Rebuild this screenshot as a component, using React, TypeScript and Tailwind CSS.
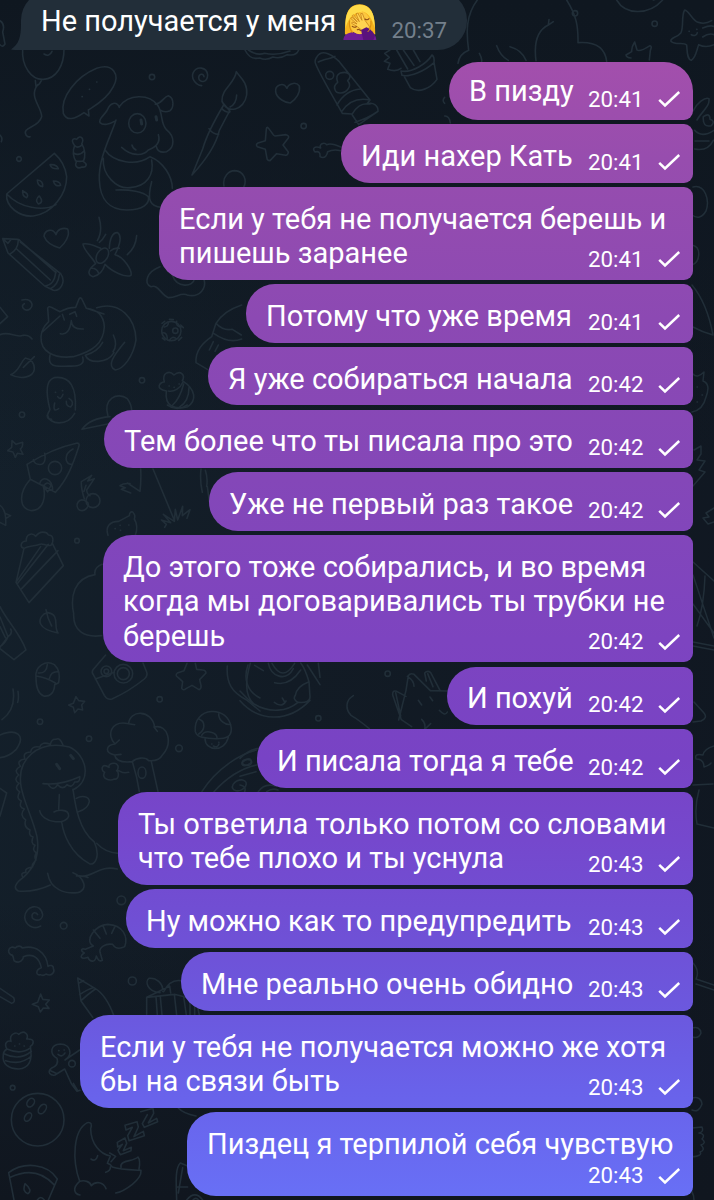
// src/App.tsx
import type { ReactNode } from "react";

type Message = {
  lines: string[];
  time: string;
  className: string;
  metaBelow?: boolean;
};

const messages: Message[] = [
  { lines: ["В пизду"], time: "20:41", className: "w-[244px] h-[58.45px] rounded-tr-[29px] pt-[5px]" },
  { lines: ["Иди нахер Кать"], time: "20:41", className: "w-[352px] h-[58.45px] pt-[7px]" },
  { lines: ["Если у тебя не получается берешь и", "пишешь заранее"], time: "20:41", className: "w-[534px] h-[92.9px] pt-[7px]" },
  { lines: ["Потому что уже время"], time: "20:41", className: "w-[447px] h-[58.45px] pt-[7px]" },
  { lines: ["Я уже собираться начала"], time: "20:42", className: "w-[485px] h-[58.45px] pt-[7px]" },
  { lines: ["Тем более что ты писала про это"], time: "20:42", className: "w-[589px] h-[58.45px] pt-[7px]" },
  { lines: ["Уже не первый раз такое"], time: "20:42", className: "w-[484px] h-[58.45px] pt-[7px]" },
  { lines: ["До этого тоже собирались, и во время", "когда мы договаривались ты трубки не", "берешь"], time: "20:42", className: "w-[590px] h-[127.3px] pt-[7px]" },
  { lines: ["И похуй"], time: "20:42", className: "w-[246px] h-[58.45px] pt-[7px]" },
  { lines: ["И писала тогда я тебе"], time: "20:42", className: "w-[436px] h-[58.45px] pt-[7px]" },
  { lines: ["Ты ответила только потом со словами", "что тебе плохо и ты уснула"], time: "20:43", className: "w-[575px] h-[92.9px] pt-[7px]" },
  { lines: ["Ну можно как то предупредить"], time: "20:43", className: "w-[567px] h-[58.45px] pt-[7px]" },
  { lines: ["Мне реально очень обидно"], time: "20:43", className: "w-[512px] h-[58.45px] pt-[7px]" },
  { lines: ["Если у тебя не получается можно же хотя", "бы на связи быть"], time: "20:43", className: "w-[613px] h-[92.9px] pt-[7px]" },
  { lines: ["Пиздец я терпилой себя чувствую"], time: "20:43", className: "w-[506px] h-[84px] pt-[7px]", metaBelow: true },
];

// --- SVG Icons ---
const CheckIcon = () => (
  <svg className="w-[24px] h-[18px]" viewBox="0 0 24 18" fill="none" stroke="currentColor" strokeWidth="2.5">
    <path d="M2.2 9.8L8 15.4L22.2 2" />
  </svg>
);

const FacepalmIcon = () => (
  <svg className="w-[34px] h-[37px] shrink-0" viewBox="0 0 102 111">
    <path d="M6 94C7 62 2 5 50 4C98 5 96 62 97 94Q82 101 72 88H30Q19 101 6 94Z" fill="#f5b21c" />
    <path d="M8 76C5 28 20 6 50 5C81 6 96 28 95 76C89 50 78 31 60 26C36 28 14 42 8 76Z" fill="#ffdc4a" />
    <path d="M21 50C30 42 46 35 58 25C70 31 82 43 82 58C82 82 68 95 51 95C34 95 20 80 21 50Z" fill="#fbc740" />
    <path d="M1 111C2 94 18 88 32 88Q50 100 69 88C88 88 99 94 100 111Z" fill="#6f1c96" />
    <path d="M28 38L31 35L49 56L39 32L44 30L57 52L53 32L58 31L66 52L79 70C80 80 68 86 57 82L43 71L26 61L28 57L42 63L23 46L27 43L43 57Z" fill="#ffd351" stroke="#c27b17" strokeWidth="2.2" strokeLinejoin="round" />
    <path d="M54 81L70 73C79 76 92 87 96 98L91 111H61L57 94Z" fill="#5a127c" />
    <path d="M28 70Q34 75 40 71M66 48Q73 53 78 47M43 80Q48 77 53 83" fill="none" stroke="#8d4b16" strokeWidth="3.5" strokeLinecap="round" />
    <path d="M20 52Q16 75 29 89M84 54Q85 77 74 87" fill="none" stroke="#d78d12" strokeWidth="3" />
  </svg>
);

// Chat wallpaper, each patch is drawn on a 3x grid
const Patch = ({ x, y, children }: { x: number; y: number; children: ReactNode }) => (
  <g transform={`translate(${x} ${y}) scale(0.33333)`}>{children}</g>
);

const Wallpaper = () => (
  <svg
    className="absolute inset-0 w-[714px] h-[1200px]"
    viewBox="0 0 714 1200"
    fill="none"
    stroke="#212e38"
    strokeWidth="4.8"
    strokeLinecap="round"
    strokeLinejoin="round"
  >
    <Patch x={0} y={0}>
      {/* balloon and speech cloud */}
      <path d="M68 145C64 200 95 240 130 238C168 236 193 198 192 145M132 162q16 10 24-8M106 242l2 18l10-8l6-10M113 254C85 290 125 320 125 350C115 385 65 380 78 405q6 8 12 5" />
      <path d="M190 340C180 290 230 230 290 205C340 188 360 225 340 260C320 300 280 320 265 330L267 348L252 338C225 357 200 365 190 340ZM268 268h1M290 246h1M246 290h1" />
      <path d="M0 62Q16 72 8 96L15 132Q8 144 0 134M0 405q9 9 4 20M57 470a7 7 0 1 0 .1 14a7 7 0 1 0-.1-14" />
      <circle cx="456" cy="231" r="8" />
      <circle cx="911" cy="378" r="8" />
      <path d="M605 257C585 255 572 232 580 217C590 198 620 200 623 225C622 250 597 249 596 233C597 221 610 219 612 230" />
      {/* candy */}
      <path d="M224 437C208 415 225 415 230 418C241 402 254 416 245 432C256 445 257 470 250 485C265 493 258 503 246 501C232 508 223 498 229 486C219 472 217 452 224 437ZM224 437Q234 447 247 434M221 459Q237 470 252 453M226 482Q240 486 250 482" />
      {/* brush */}
      <path d="M709 215C705 250 665 265 666 302C680 345 733 331 740 285C744 247 720 232 709 215ZM710 285Q709 312 690 321M666 305L690 334M671 315C650 350 620 405 608 447L576 525C620 477 650 427 658 391L687 336M627 386Q638 403 656 403M665 325Q674 337 689 337" />
      {/* heart, star */}
      <path d="M861 265C850 244 824 255 827 276C831 296 857 309 871 309C888 298 902 278 898 258C886 242 864 253 861 265Z" />
      <path d="M803 382C809 386 819 407 825 408L858 404Q869 408 865 414L849 435L865 456Q864 466 857 466L830 461L810 482Q801 482 801 475L796 448L772 440Q766 433 774 429L796 422L799 387Q799 382 803 382Z" />
      <path d="M735 150Q750 181 779 174Q799 183 819 171Q840 178 862 164Q889 169 896 150M745 150Q770 168 794 160Q830 168 870 153" />
      {/* wrapped roll */}
      <path d="M951 170C967 144 1000 167 1018 185L1110 300L1100 312C1120 305 1135 317 1134 334L1076 374L1055 342L1027 340C1005 300 960 225 947 192Q942 181 951 170ZM955 186C970 177 1000 175 1005 169M1011 315Q1036 270 1082 267M1025 335Q1055 289 1110 300M1058 340Q1078 306 1110 312M1065 367Q1105 354 1132 335M1021 219C1048 212 1057 228 1043 242Q1054 255 1044 267C1035 281 1009 284 1005 269Q1000 257 1013 247Q1005 226 1021 219Z" />
      <circle cx="989" cy="226" r="12" />
      {/* cactus */}
      <path d="M1170 150L1154 160L1168 172L1153 184L1170 190L1163 208Q1188 217 1203 205M1190 150L1223 207M1210 150L1242 196M1240 150L1260 185M1203 213C1236 220 1281 190 1296 165Q1304 170 1302 188C1274 214 1228 232 1206 226ZM1213 230L1231 263C1256 282 1293 264 1311 238L1302 187" />
      <path d="M1022 441Q994 428 980 434C972 425 956 433 962 444C943 436 936 446 945 456Q962 451 960 470C976 479 982 462 983 455Q1000 447 1022 452M672 558C666 529 688 512 704 512C732 514 742 540 731 562" />
      {/* watermelon slice */}
      <path d="M163 460L20 582C16 620 60 652 100 648C160 640 200 580 200 530Q195 488 163 460ZM20 582C60 625 130 635 168 614M150 494q20-2 25 12q-20 2-25-12ZM112 540q18 2 16 20q-16-2-16-20ZM160 543q20 0 22 13q-17 6-22-13ZM68 572q-2 17 12 21q10-10-12-21ZM118 588q-15 12-3 24q18-5 3-24Z" />
      {/* puppy */}
      <path d="M358 322C350 302 330 308 322 330C310 350 295 355 300 368C310 378 330 372 343 364M358 320C385 281 448 281 473 316C490 340 480 370 500 390C525 410 525 442 500 455Q475 461 469 440M466 313C490 308 490 290 505 287C525 295 520 325 510 332Q494 339 480 330M348 360C330 415 295 475 298 540C300 600 330 630 380 630C430 630 450 610 445 590C430 575 390 568 348 570M315 450C340 487 410 500 450 470M310 475C306 525 350 568 390 563C440 560 463 525 455 480M450 470C490 485 517 530 517 565M365 442C395 470 430 468 445 450C470 440 482 425 475 404M455 545C440 600 450 620 485 622M396 435q2 10 12 15" />
      <ellipse cx="412" cy="370" rx="26" ry="29" />
      <path strokeWidth="9" d="M423 360l2 12M468 350l2 10" />
    </Patch>

    <Patch x={440} y={0}>
      <path d="M112 0C78 45 78 95 86 151Q58 162 54 190M380 0C408 45 415 75 414 128C455 125 494 134 500 184M340 65L325 75C294 90 281 128 288 182M327 59l-2 15M170 137Q181 168 205 181M210 140Q246 150 258 181M118 160q9 16 7 24" />
      <path d="M530 0C555 44 625 48 668 0M640 0l30-10M584 126L591 150Q599 157 630 137Q637 139 631 151L628 180M584 126Q574 141 575 155L558 165Q560 173 573 174" />
      <circle cx="405" cy="40" r="8" />
      <circle cx="644" cy="71" r="8" />
      <path d="M734 30C748 33 757 61 774 67Q795 74 815 62M734 30C723 48 732 79 723 98C711 114 689 112 693 124C708 137 730 125 740 135C742 153 740 177 754 181C768 173 770 150 776 134Q798 145 822 134M788 84q24-10 36-4M788 111q20-14 36-6M747 94h1M770 88h1M754 104q14 7 18-6" />
      <path d="M760 332C770 310 795 290 807 296C810 320 786 333 771 360M790 350q20-14 20 8q17 5 4 19Q787 384 790 350M764 391Q785 415 822 391M765 423h42M764 447q40 8 56-26M14 292q-9 10 0 18M14 348Q28 347 31 369" />
    </Patch>

    <Patch x={0} y={180}>
      {/* pencil */}
      <path d="M8 176L53 178Q63 181 61 186L182 281C200 307 180 334 160 331L134 318L24 219ZM8 176L24 190L34 177M29 223Q54 210 55 181M50 207L151 300M63 185L168 278M134 318Q165 315 167 274M151 326Q174 316 178 284" />
      <path d="M168 164C159 143 134 149 132 169C140 190 164 200 179 204C196 190 211 165 203 147C187 141 171 150 168 164Z" />
      {/* propeller plane */}
      <path d="M297 112Q309 154 292 182M317 163Q308 180 298 187M410 167Q407 203 382 224M328 205C329 176 338 156 353 158C370 170 353 210 345 224C373 231 397 273 393 286C377 295 334 273 315 253Q306 285 279 290C260 284 264 268 287 251C276 231 250 210 249 192C268 188 290 201 302 205M272 265q20-1 24 16M331 213q12-11 27-8" />
      <ellipse cx="307" cy="227" rx="16" ry="25" transform="rotate(32 307 227)" />
      <path d="M66 360C93 353 103 374 90 387C74 398 59 377 73 371M0 382L23 410L0 431M0 464C30 452 45 475 70 466Q86 464 96 477" />
      {/* sleeping cat */}
      <path d="M146 425L143 385Q146 377 154 382L180 395Q204 382 227 382L237 357Q243 349 247 360L259 385C290 390 311 401 313 441C310 490 280 514 220 530C160 537 121 514 123 470Q124 446 146 425ZM290 383C360 361 407 416 408 480C400 530 370 567 346 570C320 558 338 530 374 487M340 465Q354 495 339 515M256 526C267 551 321 552 342 518M256 526Q294 514 308 487M150 525C143 558 160 561 205 558C240 560 255 552 248 531M214 422Q215 449 250 447M214 422Q208 468 181 461M209 403l16-8l5 14M259 385L312 402M128 455L180 408M193 420l-6-17" />
      {/* leaf, ghost */}
      <path d="M76 534C60 547 59 573 32 584C66 602 100 589 103 568Q104 539 76 534ZM70 562L103 530M155 718C135 717 142 702 150 689C140 650 132 603 162 593C211 586 230 623 226 690M166 637h1M187 632h1M173 650q9 13 16-7M164 669q-7 30 12 17M207 655q18 11 5 26q-14-2-13-17" />
      <circle cx="426" cy="601" r="8" />
      <circle cx="66" cy="704" r="8" />
      <path d="M324 709C308 656 352 634 382 656Q394 672 395 690" />
      {/* spotted ball */}
      <circle cx="514" cy="453" r="29" />
      <circle cx="526" cy="452" r="8" />
      <path d="M493 441q11-2 12-12M486 459q14-4 16 16M508 482q8-17 22-5M530 424q-4 13 13 17M486 430l8-6M508 418l12 1M542 435l8 8M545 472l-9 9M495 480l-8-6" />
      <path d="M480 260C440 275 430 310 453 320C475 312 482 344 505 353C530 354 544 334 564 346C600 352 620 325 612 298M517 285C530 324 580 324 584 294M648 430C663 405 695 385 725 375M648 430L635 470C607 490 586 512 588 548L622 568M648 430Q668 453 697 448L724 465M641 460Q686 492 725 477M640 485l-12 25M655 495l-10 19" />
      {/* cupcake */}
      <path d="M499 633C463 627 480 605 493 606C485 578 508 570 522 585C541 569 557 584 547 602C589 630 590 661 563 680C525 690 493 680 499 633ZM505 633C521 637 541 625 549 606M518 675Q539 657 551 612M537 682Q567 665 567 623M507 618h1M522 622h1M537 612h1" />
    </Patch>

    <Patch x={0} y={400}>
      <path d="M142 45C148 74 201 81 224 40M246 88Q270 55 330 50M246 88L334 70M502 15q30 21 60 0" />
      <path d="M36 122L48 133L68 127Q69 141 61 147L69 163L52 160L46 172L39 156L23 152L35 142Z" />
      {/* cheese, cherries */}
      <path d="M81 193Q158 145 232 129Q240 130 236 141C220 190 202 240 166 277L91 238ZM100 179Q104 196 125 193Q139 186 134 160M219 147C189 163 195 194 215 193M119 251C125 225 158 235 158 273M91 238C54 280 57 326 94 332C131 330 139 290 129 255M131 259q9-18 22-3l-10 20Z" />
      <circle cx="165" cy="204" r="20" />
      <circle cx="279" cy="302" r="21" />
      <path d="M259 304C235 290 223 317 238 330C255 337 269 320 263 307M253 296Q243 266 244 245L275 226L263 243L283 236L260 270Q261 283 270 287M252 274l6-18" />
      {/* grass and palm */}
      <path d="M422 207Q424 240 420 274L382 249M392 279L364 268L376 263L360 257Q370 249 390 251M459 207L522 358M494 382L499 373L484 360L512 368L490 343L523 364L526 328L533 360L548 319L547 347L570 329L561 355M603 207Q599 242 607 277M616 211q8 24 4 48M622 260l6 44" />
      <path d="M324 406C315 379 330 364 356 364L388 347Q389 333 398 336Q408 346 403 357Q416 378 406 405M360 376h1M345 386h1M361 391h1M386 375h1" />
      <circle cx="231" cy="422" r="7" />
      <path d="M0 316Q20 330 17 376L0 367M18 341l14 6l-14 8" />
      {/* cake slice */}
      <path d="M72 445L48 547L87 608L190 497L157 430M72 445C59 442 61 424 79 423C77 401 98 397 107 409C120 391 140 395 145 405C162 405 162 425 153 436C138 440 127 428 120 433C100 440 86 436 72 445ZM122 440L48 547M145 433L53 550M174 452L65 566" />
      <path d="M132 642C112 660 112 687 174 699C159 679 182 643 142 638ZM138 629Q142 655 155 678M0 620C19 660 60 700 78 750L42 779L0 746M0 651L24 710L0 742M0 680l16 33M24 710Q39 700 32 687M24 710Q15 732 0 739M305 707C252 714 219 692 221 641C210 590 222 534 285 524Q281 503 306 493" />
    </Patch>

    <Patch x={0} y={640}>
      {/* acorn */}
      <path d="M108 113C104 78 138 59 163 74C178 88 181 105 176 128L164 134C163 159 149 171 131 168C112 160 108 134 108 113ZM108 108Q140 113 166 129M115 99q25 2 27-25M148 116q6-24 28-20" />
      {/* camera */}
      <path d="M317 45L279 89Q274 96 280 104L313 166Q322 181 336 177Q387 154 433 117Q444 107 440 96L429 69M286 117L343 97" />
      <circle cx="319" cy="94" r="16" />
      <circle cx="319" cy="94" r="7" />
      <circle cx="370" cy="101" r="28" />
      <circle cx="370" cy="101" r="18" />
      <path d="M561 70L552 92L532 99Q524 106 534 112L548 125L545 145Q550 153 558 146L576 136L597 149Q605 145 603 136L599 119L618 99Q617 90 608 90L590 88L586 70" />
      <path d="M228 170L236 182L254 184L245 195L248 210L234 207L224 218L220 202L206 195L220 190Z" />
      <circle cx="120" cy="245" r="8" />
      <circle cx="267" cy="296" r="8" />
      <circle cx="479" cy="178" r="8" />
      <circle cx="537" cy="325" r="10" />
      <path d="M39 147Q49 208 6 239M54 154Q57 175 53 187M0 285C48 264 80 285 48 329Q26 351 0 353M0 445L20 459L0 528" />
      {/* broccoli */}
      <path d="M397 365Q348 370 344 345C312 338 318 315 345 312C319 286 332 240 386 251C388 210 455 206 464 261C504 252 519 309 488 344Q477 365 446 362C435 349 408 354 397 365ZM386 251l18 3M462 261l10 13M345 312l13-12M344 345l19-2M397 365Q412 412 418 455M454 365L474 455M386 397C360 403 362 389 351 392C367 363 322 365 327 382C306 366 300 391 314 397C302 417 330 424 343 417C357 421 358 396 350 392" />
      <ellipse cx="426" cy="398" rx="12" ry="17" />
      {/* mushroom */}
      <path d="M586 275C577 200 687 192 694 266Q694 284 683 290C670 300 625 296 608 292Q590 290 586 275ZM596 282C616 270 617 245 598 238M605 286C617 266 652 278 651 294M656 222C656 241 675 256 692 253M635 312h1M656 307h1M640 318q12 7 17-6M615 296C616 334 673 338 685 292" />
      {/* dinosaur */}
      <path d="M218 450C280 420 257 342 208 321C150 306 96 323 70 373C40 437 93 510 111 590C119 643 107 679 70 712C45 730 39 745 55 753C94 756 126 747 151 735M129 431Q180 437 239 410M145 434q15 22 28 0q15 18 28 0q15 12 23-8q17 2 15-15M219 448C225 490 235 570 283 606C302 649 285 678 268 671C210 640 190 580 185 546M178 464L176 508M119 512C127 550 198 556 206 528C207 505 170 510 162 516M229 475C245 465 268 469 268 485C264 504 251 511 235 515M290 610Q315 638 355 640M248 709C286 706 300 675 352 687M143 700C151 749 195 762 232 758C268 750 251 711 219 698M229 708q25-2 35 5M189 315Q180 291 168 298Q155 296 151 313Q126 303 119 321Q94 317 92 336Q66 337 75 357Q48 361 61 379Q39 391 56 405Q39 419 57 430Q41 444 59 456Q47 476 64 483Q55 503 73 507Q57 525 77 540Q70 561 90 570Q85 587 99 591Q91 611 105 616Q95 631 109 638Q101 652 108 660Q93 675 98 681Q72 684 78 697Q59 697 69 713" />
      <path strokeWidth="9" d="M170 373l9 13M212 346l8 10" />
      <path d="M606 454C650 385 720 342 770 330M642 455Q701 390 770 375M682 78C678 130 696 157 740 180L780 213M744 75C730 115 740 154 780 174" />
      <ellipse cx="740" cy="367" rx="15" ry="8" transform="rotate(-25 740 367)" />
      <ellipse cx="718" cy="436" rx="22" ry="15" transform="rotate(-25 718 436)" />
    </Patch>

    <Patch x={240} y={640}>
      {/* pirate */}
      <path d="M31 70C19 110 11 165 42 192C90 221 142 214 174 187Q210 190 210 171L207 125Q195 85 182 69M0 153Q40 195 42 192M0 182C55 245 144 250 210 181M44 76l26 16M85 70C93 110 138 127 160 86M96 70Q128 128 164 70M104 128Q148 140 182 90M202 75L240 134M235 70L240 112M207 125Q170 139 166 166Q157 178 174 187M103 187Q126 205 138 183M127 174l8 14" />
      <circle cx="443" cy="101" r="8" />
      <circle cx="235" cy="235" r="8" />
      <path d="M340 167C317 180 315 207 333 226Q357 240 388 266M476 240L498 151L505 107Q511 98 522 103L571 152L621 153M498 169L470 154Q457 149 458 165L484 239L515 260M559 123L554 99Q563 90 572 98L600 151M502 109Q522 121 522 139M467 158l15 70M563 101l16 39M535 181l10 14M570 171l8 11M545 238q13 12 9 30M554 268l18-17M598 211q17 19 24 5" />
      <path d="M0 355Q28 327 59 325M0 409L48 395M0 435q20 4 14 20M55 455q19-28 54-16M80 455q17-12 34-5" />
      <ellipse cx="21" cy="367" rx="14" ry="9" />
    </Patch>

    <Patch x={0} y={880}>
      <path d="M122 138C100 151 77 136 74 112C75 77 122 66 128 104C127 127 94 124 96 107C97 97 108 95 113 104" />
      <circle cx="191" cy="137" r="10" />
      <circle cx="364" cy="61" r="13" />
      <circle cx="397" cy="303" r="12" />
      <circle cx="38" cy="623" r="7" />
      {/* bones and shrimp */}
      <path d="M67 204C63 197 52 196 46 204C28 194 20 214 32 224C43 225 38 235 43 243C61 253 71 237 70 230C103 218 118 236 124 263C105 270 108 288 121 284Q130 289 138 282C155 291 166 276 160 265C161 255 148 255 144 259C139 216 105 194 67 204Z" />
      <path d="M280 198C250 180 288 135 323 133C370 135 385 171 374 200C355 210 345 204 338 193C315 189 297 203 300 217L307 241Q296 248 289 228C286 249 270 247 264 232C242 239 237 229 253 219C239 212 245 203 256 208ZM280 150L300 175M309 137L319 162M345 139L335 160" />
      <path d="M0 325L41 353Q47 368 35 370L0 350M122 342L128 358L148 360L137 373L147 385L130 384L121 396L115 380L97 373L113 367Z" />
      {/* pencil, gift */}
      <path d="M233 294L285 325Q319 345 342 408M233 294L243 363L278 412M237 309L251 302M239 344Q264 327 279 323M243 362Q263 343 286 327" />
      <path d="M440 403V352L523 343L588 359L598 405M440 352L472 337M523 343L530 405M468 350L472 405M481 350L486 405M551 350L559 405M480 338C440 335 435 303 447 295C468 292 490 310 488 334M491 335Q510 298 541 302M472 337L509 318L512 339M570 365V405M584 365V405" />
      {/* cupcake */}
      <path d="M21 507C10 490 23 480 33 484C26 460 51 455 56 463C73 447 87 464 80 477C105 475 103 491 91 499C99 543 86 565 56 567C27 565 5 554 10 523Q11 512 21 507ZM21 507Q63 526 92 503M12 521Q58 544 94 514M17 542Q63 557 94 528M44 498h1M58 492h1M72 498h1" />
      {/* gingerbread */}
      <path d="M171 535C147 520 151 494 181 492C213 493 219 526 195 540L239 510M171 535Q178 556 154 565C139 577 153 588 165 585L194 567L214 611L231 634L240 631M176 512h1M192 510h1M174 523q13 11 21-4M152 572l19 9M220 610l13 22" />
      <circle cx="216" cy="551" r="10" />
      {/* bowling ball */}
      <circle cx="113" cy="719" r="79" />
      <ellipse cx="92" cy="668" rx="10" ry="14" transform="rotate(35 92 668)" />
      <ellipse cx="127" cy="687" rx="10" ry="16" transform="rotate(35 127 687)" />
      <ellipse cx="84" cy="711" rx="9" ry="14" transform="rotate(35 84 711)" />
      {/* pizza */}
      <path d="M42 960L26 878C71 844 143 850 172 897L145 960M31 892Q108 855 162 914M75 911q-9 25 9 30q15-10-9-30ZM112 960q10-15 21 0" />
      {/* sleeping moon */}
      <path d="M239 904C216 840 219 751 262 728Q279 725 272 746C273 791 300 823 331 828L322 850Q331 852 337 861C357 869 405 870 423 871Q425 890 397 913Q368 936 347 939M239 904C217 923 221 942 240 945M239 904C253 900 270 904 274 917C287 902 310 906 318 926M273 837Q287 847 293 827M317 877Q332 872 331 861M363 862C358 839 399 846 414 831Q422 841 417 867M329 819L347 829L333 845" />
      <path d="M352 787L375 774L380 790L370 812L394 802L393 812L361 824L354 811L367 793L353 801ZM375 736L411 725L415 741L402 770L430 754L433 767L387 782L383 767L397 742L378 750ZM422 695L459 685L461 700L445 729L470 715L473 725L433 742L427 731L442 704" />
      <path d="M530 960C529 915 524 865 541 849L563 858M548 863l-13 76M533 921h30M560 960q25-31 48 0M579 960q8-10 17 0M535 684Q549 700 588 708" />
    </Patch>

    {/* right edge */}
    <g strokeWidth="1.5">
      <path d="M693 187C705 184 710 200 706 211Q700 221 692 215M692 245C702 247 700 262 692 265M692 285Q707 303 713 335Q702 332 693 327M693 374q4 5 11-2l-1 9q8 3 3 16q-3 13-14 15M697 387h.5M702 395h.5M697 402h.5M694 450l7-4v8l-4 6l8 1l-6 9l6 2l-12 14M714 508l-8 5l3 4l-6 1l5 6l6-2" />
      <path d="M693 562L714 581M693 575L714 638M693 604L714 633M693 642L714 646M693 646L714 650M705 576Q704 606 697 626M694 702L704 713Q708 718 701 721L693 722M714 746Q704 749 703 755q-9-2-7 4q8 0 8 8q6-2 7-4M693 785L713 784M699 790Q694 808 697 824L714 828M693 963q7 8 3 16M696 979L714 985M696 984L714 990M692 1028q8-2 9 5q-2 6-9 4M692 1098q9-2 10 6q-3 9-10 6M692 1128l10-1q2 5-3 6q7 1 3 6q5 4-1 6q5 5-1 7q3 4-9 5M684 1184Q694 1190 694 1200" />
    </g>
  </svg>
);

const Bubble = ({ message }: { message: Message }) => {
  const meta = (
    <div className="flex h-[34.4px] shrink-0 items-end">
      <span className="mb-[1px] w-[55px] text-[22.3px] leading-[26px]">{message.time}</span>
      <span className="mb-[4.5px] ml-[14px]">
        <CheckIcon />
      </span>
    </div>
  );
  const last = message.lines.length - 1;

  return (
    <div
      className={`shrink-0 rounded-l-[29px] rounded-r-[9px] bg-[linear-gradient(180deg,#a34fac_60px,#974dae_160px,#8c49b3_320px,#8447b8_480px,#7d44c0_640px,#7843c5_760px,#7548cd_840px,#704fd4_920px,#6b59df_1020px,#6962ea_1090px,#6870f6_1200px)] bg-fixed pl-[20px] pr-[12px] text-white ${message.className}`}
    >
      {message.lines.map((line, i) => (
        <div key={line} className="flex h-[34.4px] justify-between whitespace-nowrap">
          <span className="mt-[2.7px] text-[29px] leading-[44px]">{line}</span>
          {i === last && !message.metaBelow && (
            <div className={last === 0 && message.className.includes("rounded-tr-") ? "pt-[12px]" : "pt-[10px]"}>{meta}</div>
          )}
        </div>
      ))}
      {message.metaBelow && <div className="mt-[1.5px] flex justify-end">{meta}</div>}
    </div>
  );
};

export default function App() {
  return (
    <div className="relative h-[1200px] w-[714px] overflow-hidden bg-[linear-gradient(100deg,#14212c_0%,#121b25_45%,#101721_100%)] font-['Roboto',sans-serif]">
      <div className="absolute inset-0 bg-[linear-gradient(180deg,#0f1720_0%,transparent_40%,transparent_75%,#10161f_100%)]" />
      <Wallpaper />

      <div className="relative flex flex-col">
        <div className="relative ml-[20.5px] -mt-[9px] flex h-[58.5px] w-[446.5px] rounded-[29px] rounded-bl-none bg-[#222e39] pl-[20.5px] text-white">
          <svg className="absolute -left-[10px] bottom-0 h-[26px] w-[12px]" viewBox="0 0 12 26" fill="#222e39">
            <path d="M10 0C10 13 8 20 0 25.5Q2 26 12 26V0Z" />
          </svg>
          <span className="mt-[8px] w-[301.5px] whitespace-nowrap text-[29px] leading-[44px]">Не получается у меня</span>
          <div className="mt-[12px]">
            <FacepalmIcon />
          </div>
          <span className="ml-[15px] mt-[26px] text-[22.3px] leading-[26px] text-[#74808c]">20:37</span>
        </div>

        <div className="mt-[12px] flex flex-col items-end gap-[4.3px] pr-[21px]">
          {messages.map((message) => (
            <Bubble key={message.lines[0]} message={message} />
          ))}
        </div>
      </div>
    </div>
  );
}
